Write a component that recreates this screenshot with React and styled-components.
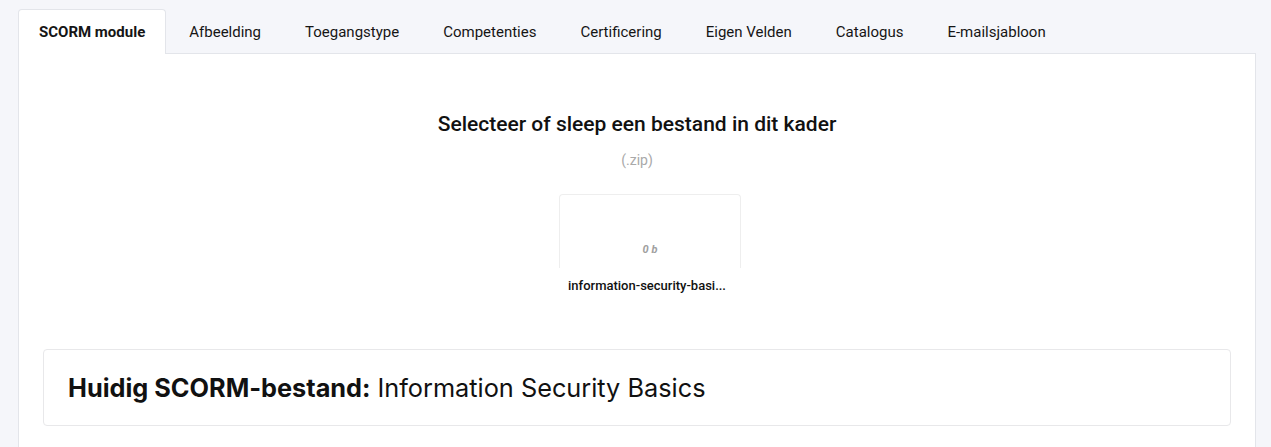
import React from "react";
import styled, { createGlobalStyle } from "styled-components";

const Global = createGlobalStyle`
  html, body { margin: 0; padding: 0; background: #f5f6fa; overflow: hidden; }
  body { font-family: Roboto, "Liberation Sans", sans-serif; color: #111; }
`;

const Page = styled.div`
  padding: 9px 15px 0 18px;
`;

const TabBar = styled.div`
  display: flex;
  border-bottom: 1px solid #e3e5ea;
`;

const Tab = styled.div`
  box-sizing: border-box;
  height: 45px;
  padding: 0 20px 0 20px;
  margin-right: 2px;
  margin-bottom: -1px;
  display: flex;
  align-items: center;
  padding-bottom: 1px;
  font-size: 15px;
  font-weight: ${(p) => (p.$active ? 700 : 400)};
  color: #151515;
  background: ${(p) => (p.$active ? "#fff" : "transparent")};
  border: 1px solid ${(p) => (p.$active ? "#e3e5ea" : "transparent")};
  border-bottom: none;
  border-radius: 4px 4px 0 0;
`;

const Panel = styled.div`
  background: #fff;
  border: 1px solid #e3e5ea;
  border-top: none;
  padding: 0 24px 24px;
  height: 400px;
`;

const Drop = styled.div`
  display: flex;
  flex-direction: column;
  align-items: center;
  padding-top: 58px;
`;

const Title = styled.div`
  font-size: 21px;
  font-weight: 500;
  line-height: 24px;
  color: #111;
`;

const Sub = styled.div`
  margin-top: 14px;
  font-size: 14px;
  line-height: 20px;
  color: #a9a9a9;
`;

const FileItem = styled.div`
  margin-top: 24px;
  margin-left: 26px;
  display: flex;
  flex-direction: column;
  align-items: center;
`;

const FileCard = styled.div`
  width: 182px;
  height: 74px;
  box-sizing: border-box;
  border: 1px solid #eeeeee;
  border-bottom: none;
  border-radius: 4px 4px 0 0;
  display: flex;
  align-items: flex-end;
  justify-content: center;
  padding-bottom: 12px;
`;

const Size = styled.span`
  font-size: 11px;
  font-style: italic;
  font-weight: 700;
  color: #a0a0a0;
`;

const FileName = styled.div`
  margin-top: 10px;
  margin-right: 6px;
  font-size: 13px;
  line-height: 16px;
  font-weight: 500;
  color: #111;
`;

const Current = styled.div`
  margin-top: 55px;
  border: 1px solid #e8e8ea;
  border-radius: 4px;
  height: 77px;
  box-sizing: border-box;
  display: flex;
  align-items: center;
  padding: 0 24px;
  font-family: Inter, "Liberation Sans", sans-serif;
  font-size: 25.3px;
  color: #111;
`;

const Strong = styled.strong`
  font-weight: 700;
  margin-right: 7px;
`;

const tabs = [
  "SCORM module",
  "Afbeelding",
  "Toegangstype",
  "Competenties",
  "Certificering",
  "Eigen Velden",
  "Catalogus",
  "E-mailsjabloon",
];

export default function App() {
  return (
    <Page>
      <Global />
      <TabBar>
        {tabs.map((t, i) => (
          <Tab key={t} $active={i === 0}>
            {t}
          </Tab>
        ))}
      </TabBar>
      <Panel>
        <Drop>
          <Title>Selecteer of sleep een bestand in dit kader</Title>
          <Sub>(.zip)</Sub>
          <FileItem>
            <FileCard>
              <Size>0 b</Size>
            </FileCard>
            <FileName>information-security-basi...</FileName>
          </FileItem>
        </Drop>
        <Current>
          <Strong>Huidig SCORM-bestand:</Strong> Information Security Basics
        </Current>
      </Panel>
    </Page>
  );
}
